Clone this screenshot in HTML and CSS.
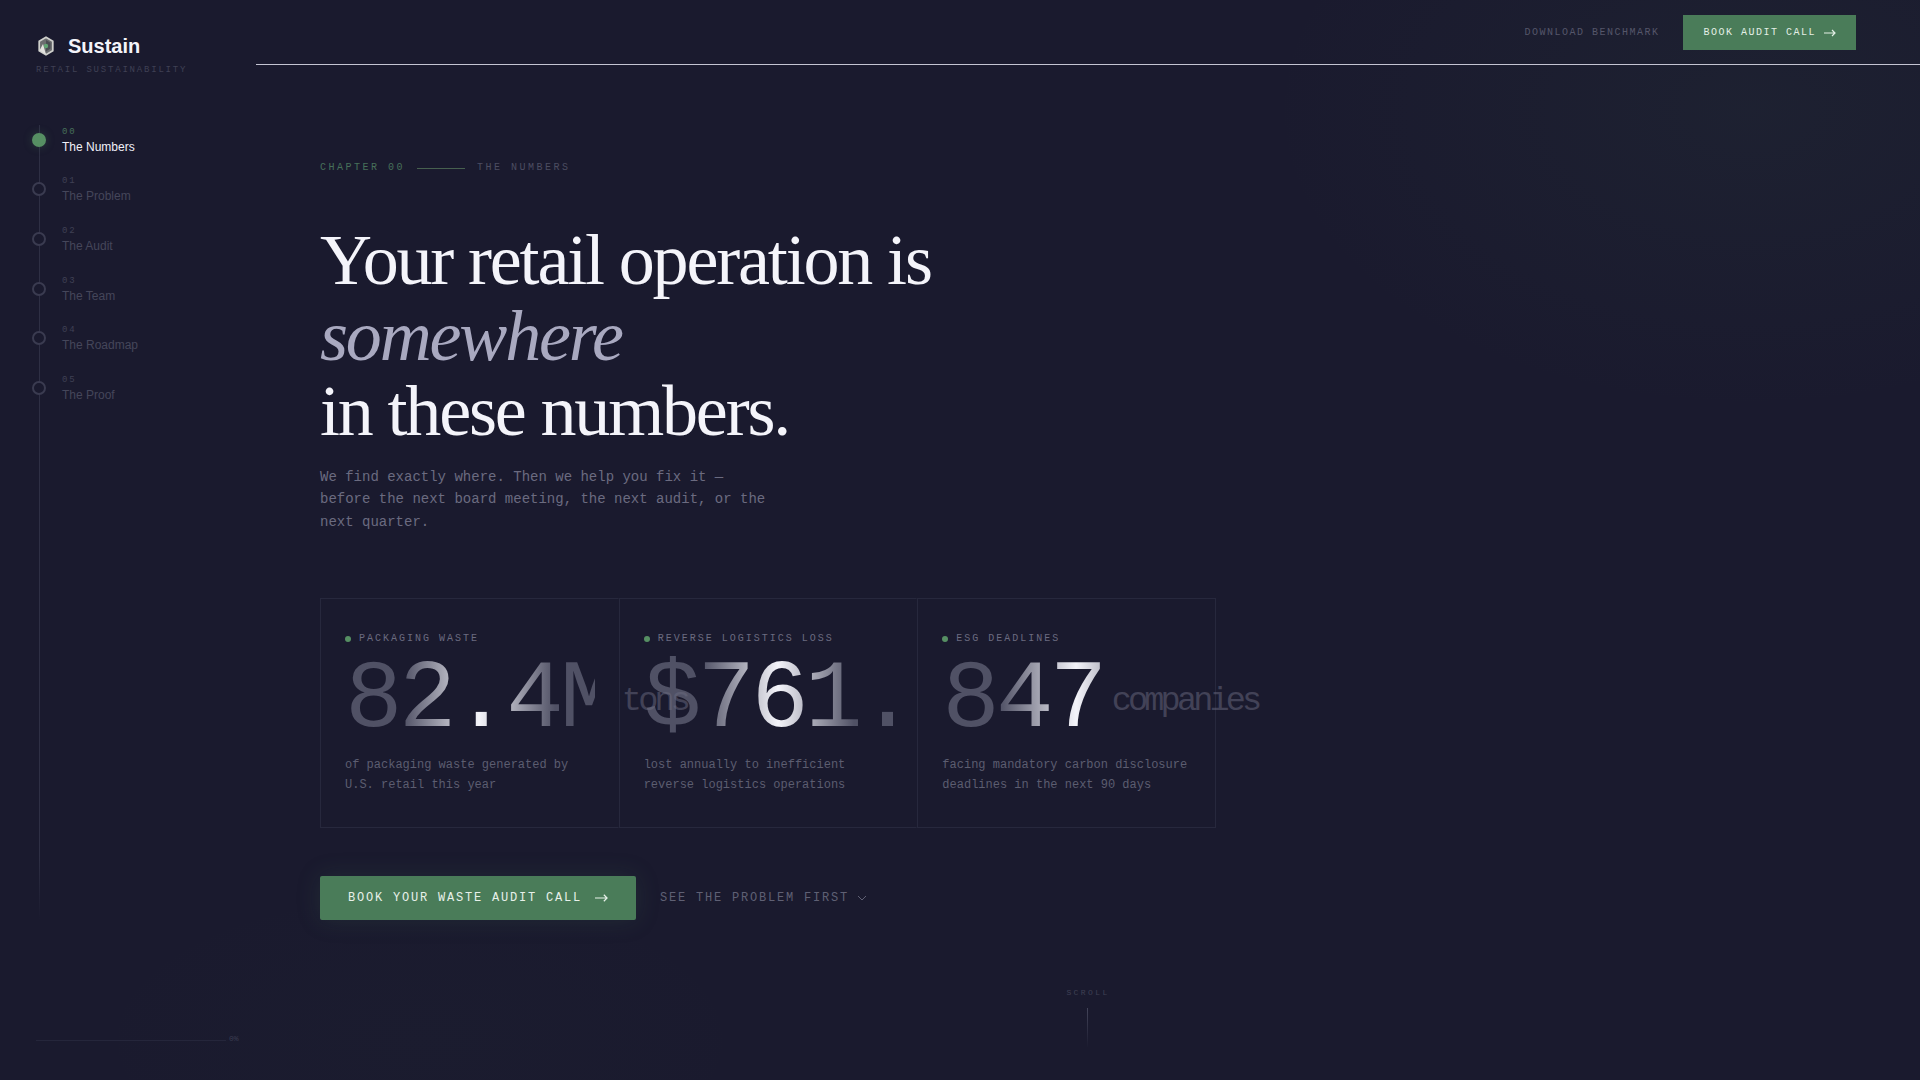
FILE: index.html
```html
<!DOCTYPE html>
<html lang="en">
<head>
    <meta charset="UTF-8">
    <title>Sustain - Retail Sustainability</title>
    <link rel="stylesheet" href="styles.css">
</head>
<body>
    <aside class="sidebar">
        <div class="brand">
            <div class="brand-row">
                <svg class="brand-icon" viewBox="0 0 16 20" width="16" height="20" fill="none">
                    <path d="M8 1.2 L14.8 5.2 V14.8 L8 18.8 L1.2 14.8 V5.2 Z" fill="#6b6d6f" stroke="#cfd0cc" stroke-width="1.7"/>
                    <path d="M1.5 14.6 L5 8 L8 18.5 Z" fill="#e2e2de"/>
                    <path d="M8 4 L12.5 6.8 V12.6 L8 15.4 Z" fill="#4a4c52"/>
                    <circle cx="8" cy="10" r="2.2" fill="#62a574"/>
                </svg>
                <span class="brand-name">Sustain</span>
            </div>
            <div class="brand-sub">RETAIL SUSTAINABILITY</div>
        </div>

        <nav class="chapters">
            <span class="chapters-line"></span>
            <a class="chapter active"><span class="chapter-dot"></span><span class="chapter-text"><span class="chapter-num">00</span><span class="chapter-name">The Numbers</span></span></a>
            <a class="chapter"><span class="chapter-dot"></span><span class="chapter-text"><span class="chapter-num">01</span><span class="chapter-name">The Problem</span></span></a>
            <a class="chapter"><span class="chapter-dot"></span><span class="chapter-text"><span class="chapter-num">02</span><span class="chapter-name">The Audit</span></span></a>
            <a class="chapter"><span class="chapter-dot"></span><span class="chapter-text"><span class="chapter-num">03</span><span class="chapter-name">The Team</span></span></a>
            <a class="chapter"><span class="chapter-dot"></span><span class="chapter-text"><span class="chapter-num">04</span><span class="chapter-name">The Roadmap</span></span></a>
            <a class="chapter"><span class="chapter-dot"></span><span class="chapter-text"><span class="chapter-num">05</span><span class="chapter-name">The Proof</span></span></a>
        </nav>

        <div class="progress">
            <span class="progress-bar"></span>
            <span class="progress-label">0%</span>
        </div>
    </aside>

    <div class="page">
        <header class="topbar">
            <a class="topbar-link">DOWNLOAD BENCHMARK</a>
            <a class="topbar-btn">BOOK AUDIT CALL
                <svg viewBox="0 0 12 8" width="12" height="8" fill="none" stroke="currentColor" stroke-width="1.2"><path d="M0 4 H11 M8 1 L11 4 L8 7"/></svg>
            </a>
        </header>

        <main class="hero">
            <div class="eyebrow">
                <span class="eyebrow-chapter">CHAPTER 00</span>
                <span class="eyebrow-line"></span>
                <span class="eyebrow-name">THE NUMBERS</span>
            </div>

            <h1 class="headline">Your retail operation is<br><em>somewhere</em><br>in these numbers.</h1>

            <p class="lead">We find exactly where. Then we help you fix it — before the next board meeting, the next audit, or the next quarter.</p>

            <section class="stats">
                <div class="stat">
                    <div class="stat-label"><span class="stat-dot"></span>PACKAGING WASTE</div>
                    <div class="stat-value"><span class="stat-number">82.4M</span><span class="stat-unit">tons</span></div>
                    <p class="stat-desc">of packaging waste generated by U.S. retail this year</p>
                </div>
                <div class="stat">
                    <div class="stat-label"><span class="stat-dot"></span>REVERSE LOGISTICS LOSS</div>
                    <div class="stat-value"><span class="stat-number">$761.2B</span></div>
                    <p class="stat-desc">lost annually to inefficient reverse logistics operations</p>
                </div>
                <div class="stat">
                    <div class="stat-label"><span class="stat-dot"></span>ESG DEADLINES</div>
                    <div class="stat-value"><span class="stat-number">847</span><span class="stat-unit">companies</span></div>
                    <p class="stat-desc">facing mandatory carbon disclosure deadlines in the next 90 days</p>
                </div>
            </section>

            <div class="actions">
                <a class="cta">BOOK YOUR WASTE AUDIT CALL
                    <svg viewBox="0 0 14 10" width="13" height="10" fill="none" stroke="currentColor" stroke-width="1.3"><path d="M0 5 H13 M9.5 1.5 L13 5 L9.5 8.5"/></svg>
                </a>
                <a class="cta-link">SEE THE PROBLEM FIRST
                    <svg viewBox="0 0 10 6" width="10" height="6" fill="none" stroke="currentColor" stroke-width="1"><path d="M1 1 L5 5 L9 1"/></svg>
                </a>
            </div>

            <div class="scroll-hint">
                <span>SCROLL</span>
                <span class="scroll-line"></span>
            </div>
        </main>
    </div>
</body>
</html>
```

FILE: styles.css
```css
* {
    margin: 0;
    padding: 0;
    box-sizing: border-box;
}

body {
    width: 1920px;
    height: 1080px;
    overflow: hidden;
    display: flex;
    background-color: #1a1a2e;
    background-image:
        radial-gradient(ellipse 480px 300px at 1750px 110px, rgba(74, 124, 89, 0.07), transparent 100%),
        radial-gradient(ellipse 340px 160px at 420px 1040px, rgba(74, 124, 89, 0.02), transparent 100%);
    font-family: "Liberation Sans", Arial, sans-serif;
    color: #f0f0f8;
}

/* sidebar */
.sidebar {
    position: relative;
    width: 256px;
    flex-shrink: 0;
    display: flex;
    flex-direction: column;
    padding: 34px 0 0 32px;
}

.brand {
    padding-left: 4px;
}

.brand-row {
    display: flex;
    align-items: center;
    gap: 14px;
    height: 24px;
}

.brand-icon {
    margin-left: 2px;
    flex-shrink: 0;
}

.brand-name {
    font-size: 20px;
    font-weight: 700;
    color: #f4f4fa;
}

.brand-sub {
    margin-top: 7px;
    font-family: "Liberation Mono", monospace;
    font-size: 9px;
    letter-spacing: 0.2em;
    color: #3f4054;
}

.chapters {
    position: relative;
    margin-top: 40px;
    display: flex;
    flex-direction: column;
}

.chapters-line {
    position: absolute;
    left: 7px;
    top: 10px;
    width: 1px;
    height: 794px;
    background: linear-gradient(to bottom, #2e2f44 0%, #2e2f44 92%, rgba(46, 47, 68, 0) 100%);
}

.chapter {
    position: relative;
    height: 49.6px;
    display: flex;
    align-items: center;
    gap: 16px;
}

.chapter-dot {
    width: 14px;
    height: 14px;
    border-radius: 50%;
    border: 2px solid #3a3b50;
    background: #1a1a2e;
    flex-shrink: 0;
}

.chapter.active .chapter-dot {
    background: #568f63;
    border-color: #568f63;
    box-shadow: 0 0 8px rgba(74, 124, 89, 0.35);
}

.chapter-text {
    display: flex;
    flex-direction: column;
    padding-top: 2px;
}

.chapter-num {
    font-family: "Liberation Mono", monospace;
    font-size: 9px;
    line-height: 12px;
    letter-spacing: 0.2em;
    color: #3f4054;
}

.chapter-name {
    font-size: 12px;
    line-height: 18px;
    color: #45465a;
}

.chapter.active .chapter-num {
    color: #47705a;
}

.chapter.active .chapter-name {
    color: #f0f0f8;
}

.progress {
    position: absolute;
    left: 36px;
    top: 1038px;
    display: flex;
    align-items: center;
    gap: 3px;
}

.progress-bar {
    width: 190px;
    height: 1px;
    background: #25263b;
}

.progress-label {
    margin-top: -4px;
    font-family: "Liberation Mono", monospace;
    font-size: 8px;
    color: #3a3b50;
}

/* top bar */
.page {
    flex: 1;
    display: flex;
    flex-direction: column;
}

.topbar {
    height: 65px;
    flex-shrink: 0;
    display: flex;
    align-items: center;
    justify-content: flex-end;
    gap: 24px;
    padding-right: 64px;
    padding-top: 1px;
    border-bottom: 1px solid #c4c4d2;
}

.topbar-link {
    font-family: "Liberation Mono", monospace;
    font-size: 10px;
    letter-spacing: 0.15em;
    color: #55566a;
}

.topbar-btn {
    height: 35px;
    display: flex;
    align-items: center;
    gap: 8px;
    padding: 0 20px;
    background: #4a7c59;
    font-family: "Liberation Mono", monospace;
    font-size: 10px;
    letter-spacing: 0.15em;
    color: #e4efe6;
}

/* hero */
.hero {
    position: relative;
    flex: 1;
    padding: 97px 0 0 64px;
}

.eyebrow {
    display: flex;
    align-items: center;
    gap: 12px;
    font-family: "Liberation Mono", monospace;
    font-size: 10px;
    line-height: 12px;
    letter-spacing: 0.25em;
}

.eyebrow-chapter {
    color: #47705a;
}

.eyebrow-line {
    width: 48px;
    height: 1px;
    background: #47604f;
}

.eyebrow-name {
    color: #4c4d61;
}

.headline {
    margin-top: 49px;
    font-family: "Liberation Serif", "Times New Roman", serif;
    font-size: 72px;
    font-weight: 400;
    line-height: 75.6px;
    letter-spacing: -0.03em;
    color: #f4f4fa;
}

.headline em {
    font-style: italic;
    color: #a9a9c0;
}

.lead {
    margin-top: 16px;
    max-width: 450px;
    font-family: "Liberation Mono", monospace;
    font-size: 14px;
    line-height: 22.4px;
    color: #6b6b80;
}

/* stat cards */
.stats {
    margin-top: 65px;
    width: 896px;
    display: grid;
    grid-template-columns: repeat(3, 1fr);
}

.stat {
    height: 230px;
    padding: 34px 24px 0;
    border: 1px solid #27283d;
    border-right-color: transparent;
    min-width: 0;
}

.stat:last-child {
    border-right-color: #27283d;
}

.stat-label {
    display: flex;
    align-items: center;
    gap: 8px;
    font-family: "Liberation Mono", monospace;
    font-size: 10px;
    line-height: 12px;
    letter-spacing: 0.2em;
    color: #6b6b80;
}

.stat-dot {
    width: 6px;
    height: 6px;
    border-radius: 50%;
    background: #568f63;
}

.stat-value {
    display: flex;
    align-items: center;
    height: 96px;
    margin-top: 8px;
    font-family: "Liberation Mono", monospace;
    font-size: 96px;
    line-height: 96px;
    letter-spacing: -0.04em;
}

/* the gradient stops are in px so the bright band sits at the same spot in all three cards */
.stat-number {
    flex-shrink: 0;
    white-space: nowrap;
    clip-path: inset(0 calc(100% - 250px) 0 0);
    background-image: linear-gradient(90deg, #505165 58px, #f4f4fa 134px, #505165 210px);
    -webkit-background-clip: text;
    background-clip: text;
    color: transparent;
}

.stat-unit {
    position: relative;
    z-index: 1;
    flex-shrink: 0;
    margin-left: 8px;
    font-size: 33.6px;
    color: rgba(107, 107, 128, 0.5);
}

.stat-desc {
    margin-top: 7px;
    font-family: "Liberation Mono", monospace;
    font-size: 12px;
    line-height: 19.8px;
    color: #5c5d70;
}

/* actions */
.actions {
    margin-top: 48px;
    display: flex;
    align-items: center;
    gap: 24px;
}

.cta {
    height: 44px;
    display: flex;
    align-items: center;
    gap: 13px;
    padding: 0 28px;
    background: #4a7c59;
    border-radius: 2px;
    box-shadow: 0 0 24px rgba(74, 124, 89, 0.18);
    font-family: "Liberation Mono", monospace;
    font-size: 12px;
    letter-spacing: 0.15em;
    color: #e8f1ea;
}

.cta-link {
    display: flex;
    align-items: center;
    gap: 8px;
    padding-bottom: 1px;
    font-family: "Liberation Mono", monospace;
    font-size: 12px;
    letter-spacing: 0.15em;
    color: #5f6074;
}

.scroll-hint {
    position: absolute;
    left: 0;
    right: 0;
    top: 923px;
    display: flex;
    flex-direction: column;
    align-items: center;
    gap: 10px;
    font-family: "Liberation Mono", monospace;
    font-size: 8px;
    line-height: 10px;
    letter-spacing: 0.3em;
    color: #3f4054;
}

.scroll-line {
    width: 1px;
    height: 40px;
    margin-left: -1px;
    background: linear-gradient(to bottom, #44455a, rgba(68, 69, 90, 0));
}
```
